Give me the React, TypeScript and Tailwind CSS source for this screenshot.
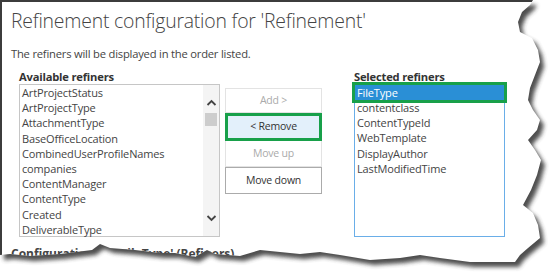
import React from "react";

const available = [
  "ArtProjectStatus",
  "ArtProjectType",
  "AttachmentType",
  "BaseOfficeLocation",
  "CombinedUserProfileNames",
  "companies",
  "ContentManager",
  "ContentType",
  "Created",
  "DeliverableType",
];

const selected = ["contentclass", "ContentTypeId", "WebTemplate", "DisplayAuthor", "LastModifiedTime"];

const PAPER =
  "M0,0 L533,0 L530,5 L522,12 L518,22 L520,32 L532,38 L538,50 L540,62 L535,75 L530,88 L528,100 L533,110 L540,120 L537,130 L528,140 L535,150 L541,160 L537,175 L531,190 L523,205 L533,213 L538,225 L540,238 L528,248 L520,255 L515,262 L490,262 L470,262 L440,258 L420,255 L400,258 L370,260 L340,255 L320,252 L300,254 L260,250 L240,256 L215,254 L207,250 L195,257 L175,253 L160,253 L135,250 L110,248 L100,244 L92,250 L60,254 L30,256 L10,254 L0,255 Z";
const OUTSIDE = "M-10,-10 H560 V290 H-10 Z " + PAPER;

function TornEdge() {
  return (
    <svg className="absolute inset-0 pointer-events-none" width={550} height={280}>
      <defs>
        <clipPath id="outside">
          <path clipRule="evenodd" d={OUTSIDE} />
        </clipPath>
        <filter id="blur" x="-10%" y="-10%" width="120%" height="120%">
          <feGaussianBlur stdDeviation="2.2" />
        </filter>
      </defs>
      <path fillRule="evenodd" d={OUTSIDE} fill="#ffffff" />
      <g clipPath="url(#outside)">
        <path d={PAPER} transform="translate(4,5)" fill="#3a3a3a" opacity={0.9} filter="url(#blur)" />
      </g>
    </svg>
  );
}

export default function App() {
  return (
    <div
      className="relative w-[550px] h-[280px] overflow-hidden bg-white text-[#444]"
      style={{ fontFamily: "'Open Sans', 'Noto Sans', sans-serif" }}
    >
      <div className="h-full border-l-2 border-t-2 border-[#3c3c3c] pl-[9px] pt-[7px]">
        <div className="text-[19.4px] font-light leading-[24px] text-[#444] tracking-[-0.2px]">
          Refinement configuration for 'Refinement'
        </div>
        <div className="mt-[13px] text-[11.2px] leading-[16px] tracking-[-0.2px] text-[#444]">
          The refiners will be displayed in the order listed.
        </div>
        <div className="mt-[7px] flex pl-[8px]">
          <div className="w-[201px]">
            <div className="text-[11.2px] font-bold leading-[15px] text-[#333] tracking-[-0.2px]">Available refiners</div>
            <div className="flex h-[153px] border border-[#c6c6c6]">
              <div className="flex-1 pl-[2px] text-[11px] leading-[15.2px] text-[#444] tracking-[-0.15px]">
                {available.map((a) => (
                  <div key={a} className="h-[15.2px] whitespace-nowrap">
                    {a}
                  </div>
                ))}
              </div>
              <div className="flex w-[16px] flex-col items-center bg-[#f4f4f4]">
                <svg width="11" height="8" viewBox="0 0 11 8" className="mt-[14px]">
                  <path d="M1.5 6 L5.5 2 L9.5 6" fill="none" stroke="#444" strokeWidth="1.8" />
                </svg>
                <div className="mt-[6px] h-[13px] w-[12px] bg-[#cdcdcd]" />
                <div className="flex-1" />
                <svg width="11" height="8" viewBox="0 0 11 8" className="mb-[14px]">
                  <path d="M1.5 2 L5.5 6 L9.5 2" fill="none" stroke="#444" strokeWidth="1.8" />
                </svg>
              </div>
            </div>
          </div>
          <div className="ml-[5px] mt-[19px] flex w-[97px] flex-col text-[10.5px] tracking-[-0.2px]">
            <div className="flex h-[25px] items-center justify-center border border-[#e3e3e3] text-[#aaa]">Add &gt;</div>
            <div className="flex h-[28px] items-center justify-center border-[3px] border-[#18a04a] bg-[#e3f0fb] text-[#333]">
              &lt; Remove
            </div>
            <div className="flex h-[26px] items-center justify-center border border-[#e3e3e3] border-t-0 text-[#aaa]">Move up</div>
            <div className="flex h-[27px] items-center justify-center border border-[#ababab] text-[#333]">Move down</div>
          </div>
          <div className="ml-[32px] w-[151px]">
            <div className="text-[11.2px] font-bold leading-[15px] text-[#333] tracking-[-0.2px]">Selected refiners</div>
            <div className="h-[153px] border border-[#6aaee8] text-[11px] leading-[15.2px] text-[#444] tracking-[-0.15px]">
              <div className="h-[15px] bg-[#2a8fd6] pl-[2px] text-white outline-[3px] outline-solid outline-[#18a04a]">FileType</div>
              {selected.map((s) => (
                <div key={s} className="h-[15.2px] pl-[2px] whitespace-nowrap">
                  {s}
                </div>
              ))}
            </div>
          </div>
        </div>
        <div className="mt-[9px] text-[12px] font-bold leading-[16px] text-[#444]">
          Configuration for 'FileType' (Refiners)
        </div>
      </div>
      <TornEdge />
    </div>
  );
}
